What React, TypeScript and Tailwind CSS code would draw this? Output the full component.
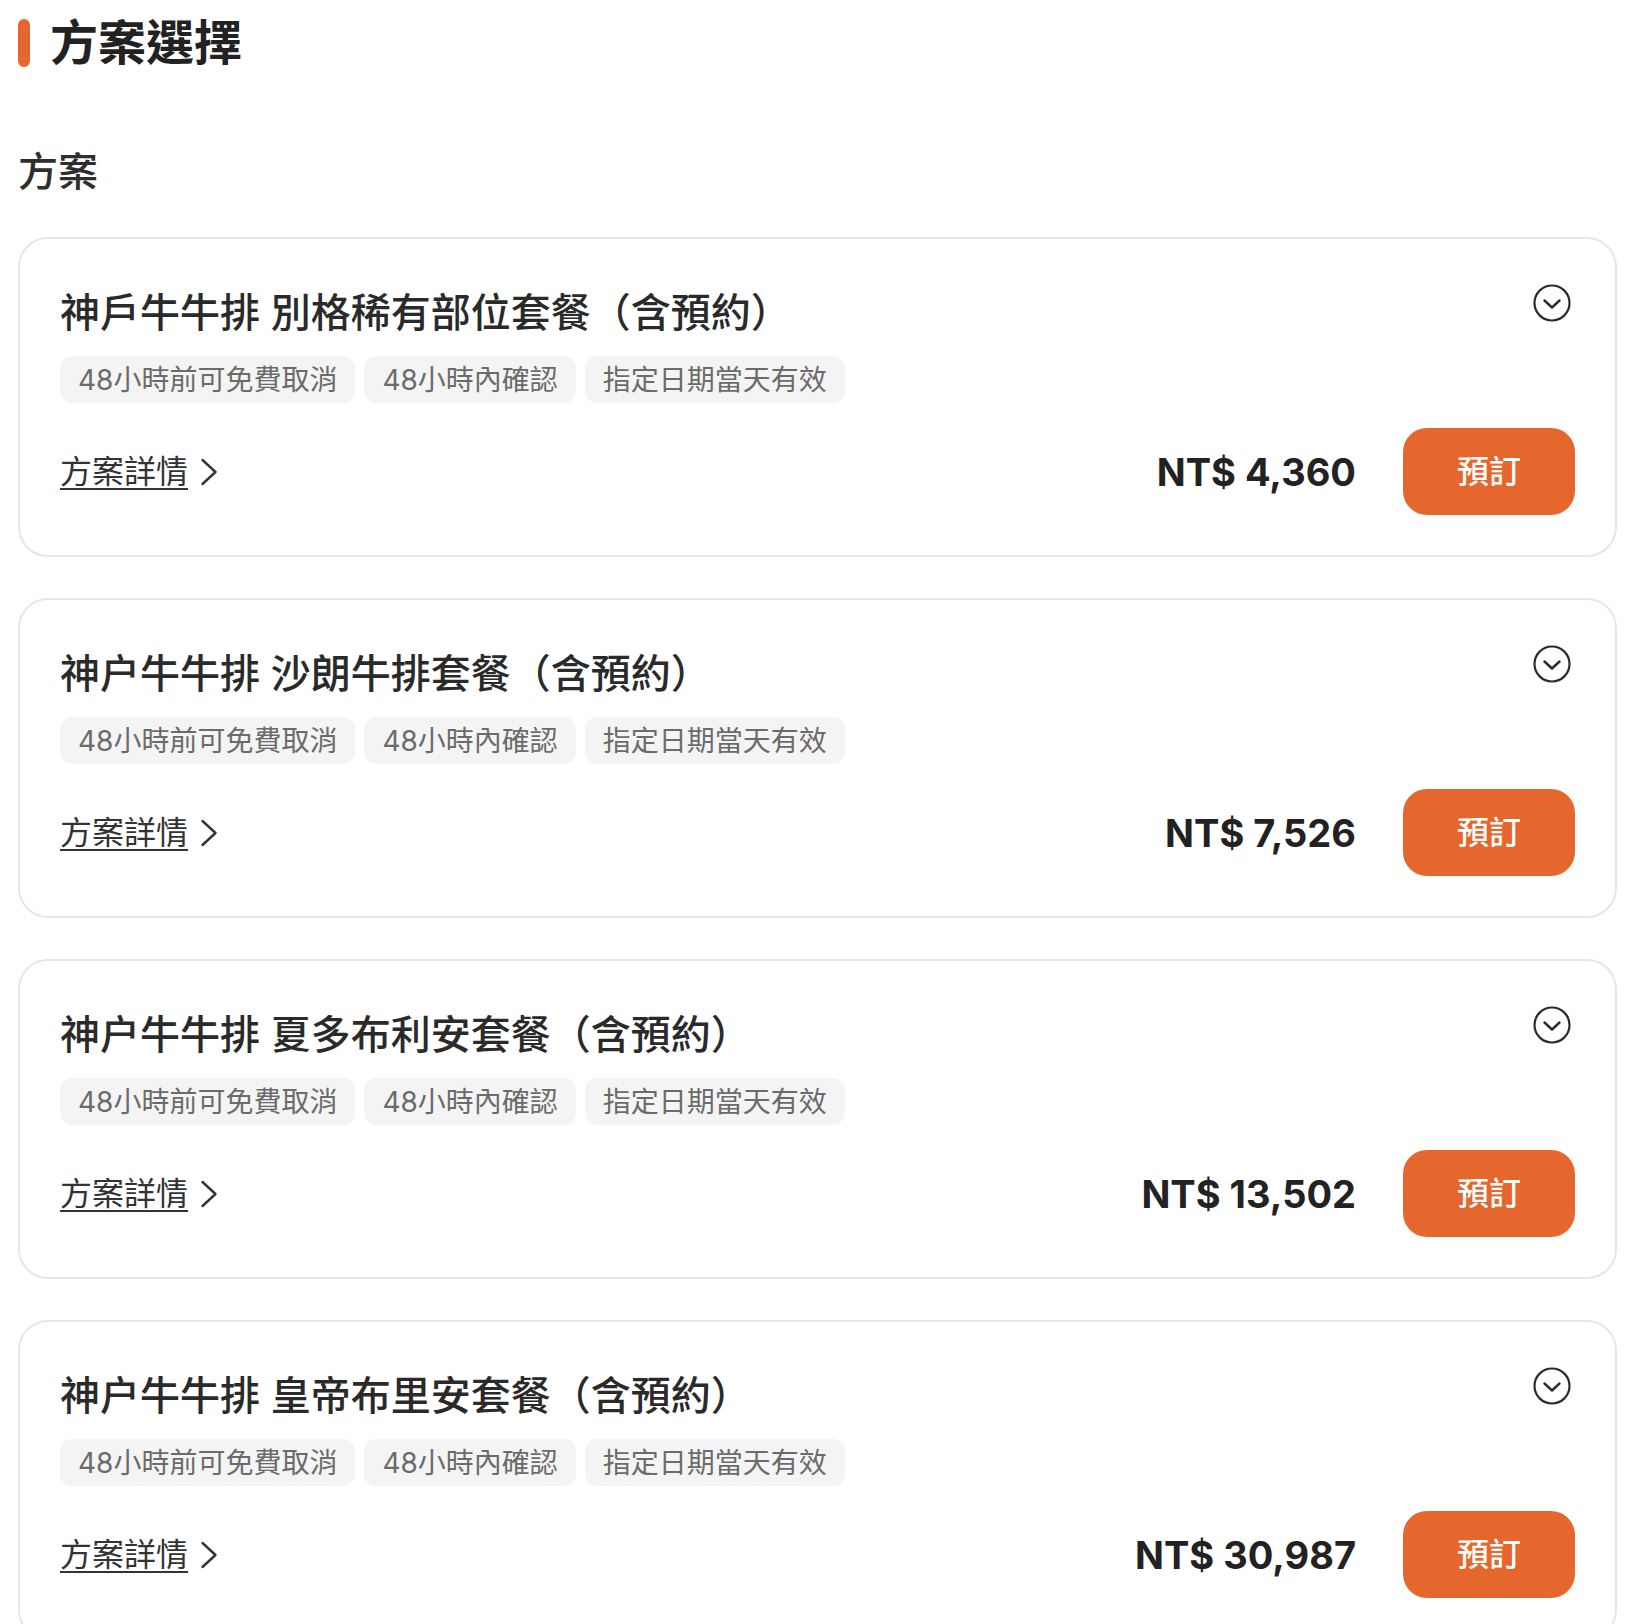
import React from 'react';

const PLANS = [
  { title: '神戶牛牛排 別格稀有部位套餐（含預約）', price: 'NT$ 4,360' },
  { title: '神户牛牛排 沙朗牛排套餐（含預約）', price: 'NT$ 7,526' },
  { title: '神户牛牛排 夏多布利安套餐（含預約）', price: 'NT$ 13,502' },
  { title: '神户牛牛排 皇帝布里安套餐（含預約）', price: 'NT$ 30,987' },
];

const TAGS = ['48小時前可免費取消', '48小時內確認', '指定日期當天有效'];

const CircleChevron = () => (
  <svg width="38" height="38" viewBox="0 0 38 38" fill="none" className="mr-[4px] -mt-[1px] shrink-0">
    <circle cx="19" cy="19" r="17.5" stroke="#2b2b2b" strokeWidth="2.2" />
    <path d="M11.5 16.5 19 23.5 26.5 16.5" stroke="#2b2b2b" strokeWidth="2.4" strokeLinecap="round" strokeLinejoin="round" />
  </svg>
);

const ChevronRight = () => (
  <svg width="18" height="28" viewBox="0 0 18 28" fill="none">
    <path d="M2.5 2 15.5 14 2.5 26" stroke="#333" strokeWidth="2.4" strokeLinecap="round" strokeLinejoin="round" />
  </svg>
);

const PlanCard: React.FC<{ title: string; price: string }> = ({ title, price }) => (
  <div className="rounded-[30px] border-2 border-[#e6e6e6] bg-white px-[40px] pt-[46px] pb-[40px]">
    {/* title + toggle */}
    <div className="flex items-start justify-between">
      <h3 className="text-[40px] leading-[56px] font-medium text-[#2a2a2a]">{title}</h3>
      <CircleChevron />
    </div>

    {/* tags */}
    <div className="mt-[15px] flex gap-[9px]">
      {TAGS.map((t) => (
        <span key={t}
          className="flex h-[47px] items-center rounded-[12px] bg-[#f4f4f4] px-[18px] text-[28px] leading-none text-[#6b6b6b]">
          {t}
        </span>
      ))}
    </div>

    {/* details + price + book */}
    <div className="mt-[25px] flex items-center justify-between">
      <a className="flex items-center gap-[12px] text-[32px] leading-none text-[#333] cursor-pointer">
        <span className="underline decoration-[2px] underline-offset-[5px]">方案詳情</span>
        <ChevronRight />
      </a>
      <div className="flex items-center gap-[47px]">
        <span className="text-[38px] leading-none font-bold text-[#222]">{price}</span>
        <button className="h-[87px] w-[172px] rounded-[24px] bg-[#e5672d] text-[32px] font-medium text-white">
          預訂
        </button>
      </div>
    </div>
  </div>
);

export default function App() {
  return (
    <div className="min-h-screen bg-white pl-[18px] pr-[15px] pt-[19px] font-['Inter','Noto_Sans_CJK_TC',sans-serif]">
      {/* ── Section heading ── */}
      <div className="flex items-start gap-[20px]">
        <span className="h-[48px] w-[12px] rounded-full bg-[#e5672d]" />
        <h2 className="text-[48px] leading-[48px] font-bold text-[#222]">方案選擇</h2>
      </div>

      <h4 className="mt-[85px] text-[40px] leading-[40px] font-medium text-[#2e2e2e]">方案</h4>

      {/* ── Plans ── */}
      <div className="mt-[45px] flex flex-col gap-[41px]">
        {PLANS.map((p) => (
          <PlanCard key={p.price} title={p.title} price={p.price} />
        ))}
      </div>
    </div>
  );
}
